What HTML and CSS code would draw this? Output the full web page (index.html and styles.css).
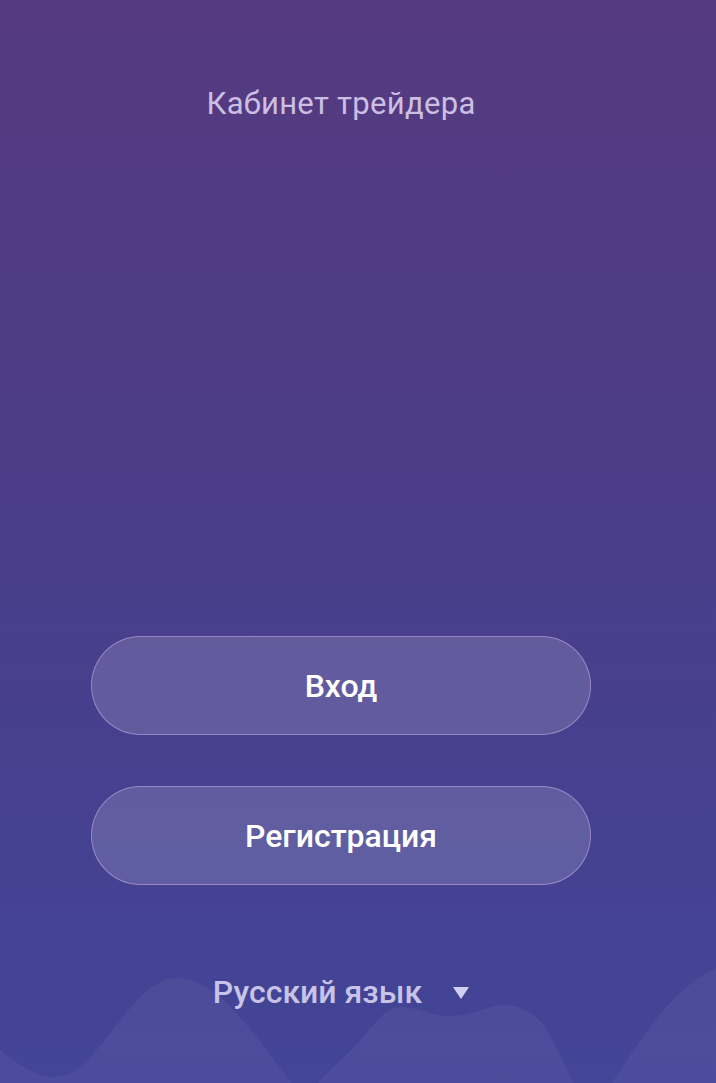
FILE: index.html
```html
<!DOCTYPE html>
<html lang="ru">
<head>
<meta charset="utf-8">
<title>Кабинет трейдера</title>
<link rel="stylesheet" href="styles.css">
</head>
<body>
<div class="screen">
  <svg class="waves" viewBox="0 940 716 143" preserveAspectRatio="none" aria-hidden="true">
    <path d="M0,1050 C20,1066 38,1078 57,1077 C100,1074 130,978 177,978 C222,978 256,1040 292,1083 L0,1083 Z"/>
    <path d="M318,1083 C335,1065 350,1052 365,1035 C378,1018 388,1007 400,1007 C420,1007 432,1017 453,1016 C475,1015 490,1004 506,1005 C525,1006 536,1015 545,1027 C556,1045 565,1065 574,1083 Z"/>
    <path d="M612,1083 C640,1040 670,990 716,968 L716,1083 Z"/>
  </svg>
  <main class="page">
    <h1 class="title">Кабинет трейдера</h1>
    <div class="actions">
      <button class="btn" type="button">Вход</button>
      <button class="btn" type="button">Регистрация</button>
    </div>
    <div class="lang">
      <span class="lang-label">Русский язык</span>
      <span class="lang-caret"></span>
    </div>
  </main>
</div>
</body>
</html>
```

FILE: styles.css
```css
html, body {
  margin: 0;
  padding: 0;
}

body {
  font-family: Roboto, "Noto Sans", "Liberation Sans", sans-serif;
  background: #434497;
}

.screen {
  position: relative;
  width: 716px;
  height: 1083px;
  overflow: hidden;
  background: linear-gradient(180deg, #553a80 0%, #4d3d87 40%, #46408f 70%, #434598 100%);
}

.waves {
  position: absolute;
  left: 0;
  bottom: 0;
  width: 716px;
  height: 143px;
}

.waves path {
  fill: rgba(255, 255, 255, 0.045);
}

.page {
  position: relative;
  width: 682px;
  height: 1083px;
  display: flex;
  flex-direction: column;
  align-items: center;
}

.title {
  margin: 86px 0 0;
  font-size: 31px;
  line-height: 36px;
  font-weight: 400;
  color: #cbbfe2;
  letter-spacing: 0.3px;
}

.actions {
  margin-top: 514px;
  display: flex;
  flex-direction: column;
  gap: 51px;
}

.btn {
  width: 500px;
  height: 99px;
  border-radius: 50px;
  border: 1px solid rgba(200, 170, 230, 0.55);
  background: rgba(255, 255, 255, 0.15);
  color: #ffffff;
  font-family: Roboto, "Noto Sans", "Liberation Sans", sans-serif;
  font-size: 32px;
  font-weight: 500;
  padding: 0;
  cursor: pointer;
}

.lang {
  margin-top: 89px;
  display: flex;
  align-items: center;
  gap: 31px;
  height: 36px;
}

.lang-label {
  font-size: 32px;
  line-height: 36px;
  font-weight: 500;
  color: #c7c4e8;
}

.lang-caret {
  width: 0;
  height: 0;
  border-left: 8.5px solid transparent;
  border-right: 8.5px solid transparent;
  border-top: 12px solid #d2d0f0;
  margin-top: 2px;
}
```
